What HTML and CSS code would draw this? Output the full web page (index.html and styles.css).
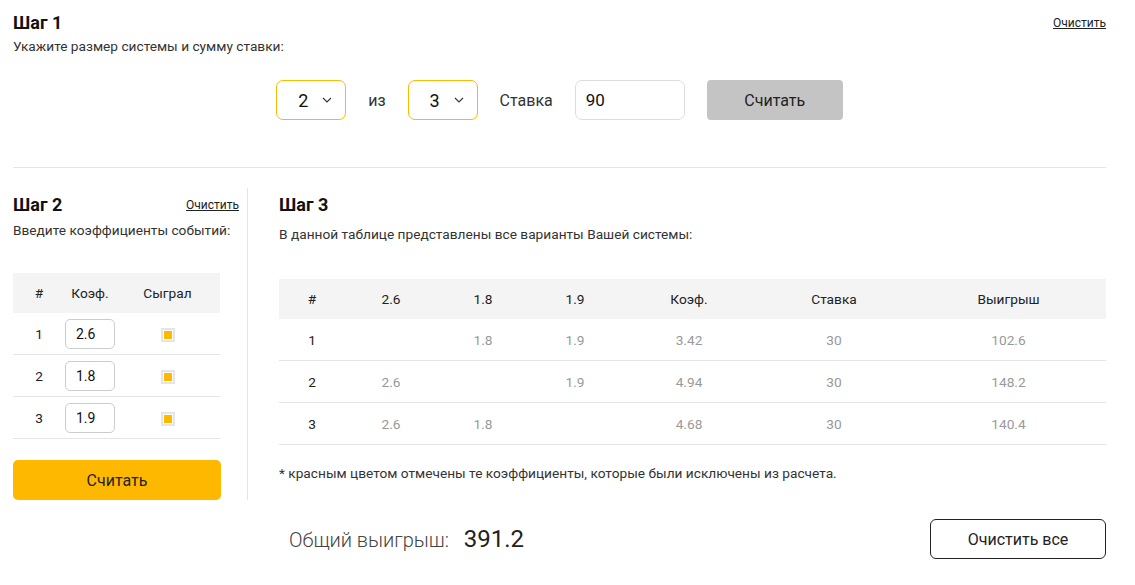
FILE: index.html
```html
<!DOCTYPE html>
<html lang="ru">
<head>
    <meta charset="UTF-8">
    <meta name="viewport" content="width=device-width, initial-scale=1.0">
    <title>Калькулятор систем</title>
    <link rel="stylesheet" href="styles.css">
</head>
<body>
    <div class="page">
        <div class="step1">
            <div class="step-head">
                <h2>Шаг 1</h2>
                <a href="#" class="clear-link">Очистить</a>
            </div>
            <p class="hint">Укажите размер системы и сумму ставки:</p>
            <div class="controls">
                <div class="select">2 <svg width="10" height="6" viewBox="0 0 10 6"><path d="M1 1l4 4 4-4" fill="none" stroke="#333" stroke-width="1.1"/></svg></div>
                <span class="label">из</span>
                <div class="select">3 <svg width="10" height="6" viewBox="0 0 10 6"><path d="M1 1l4 4 4-4" fill="none" stroke="#333" stroke-width="1.1"/></svg></div>
                <span class="label">Ставка</span>
                <input type="text" class="stake" value="90">
                <button class="btn-gray">Считать</button>
            </div>
        </div>

        <div class="steps">
            <div class="step2">
                <div class="step-head">
                    <h2>Шаг 2</h2>
                    <a href="#" class="clear-link">Очистить</a>
                </div>
                <p class="hint">Введите коэффициенты событий:</p>
                <table class="odds">
                    <thead>
                        <tr><th class="o-num">#</th><th class="o-k">Коэф.</th><th>Сыграл</th></tr>
                    </thead>
                    <tbody>
                        <tr><td>1</td><td><input type="text" value="2.6"></td><td><span class="check"></span></td></tr>
                        <tr><td>2</td><td><input type="text" value="1.8"></td><td><span class="check"></span></td></tr>
                        <tr><td>3</td><td><input type="text" value="1.9"></td><td><span class="check"></span></td></tr>
                    </tbody>
                </table>
                <button class="btn-yellow">Считать</button>
            </div>

            <div class="step3">
                <h2>Шаг 3</h2>
                <p class="hint">В данной таблице представлены все варианты Вашей системы:</p>
                <table class="result">
                    <thead>
                        <tr>
                            <th class="c-num">#</th>
                            <th class="c-odd">2.6</th>
                            <th class="c-odd">1.8</th>
                            <th class="c-odd">1.9</th>
                            <th class="c-k">Коэф.</th>
                            <th class="c-st">Ставка</th>
                            <th>Выигрыш</th>
                        </tr>
                    </thead>
                    <tbody>
                        <tr><td class="c-num">1</td><td></td><td>1.8</td><td>1.9</td><td>3.42</td><td>30</td><td>102.6</td></tr>
                        <tr><td class="c-num">2</td><td>2.6</td><td></td><td>1.9</td><td>4.94</td><td>30</td><td>148.2</td></tr>
                        <tr><td class="c-num">3</td><td>2.6</td><td>1.8</td><td></td><td>4.68</td><td>30</td><td>140.4</td></tr>
                    </tbody>
                </table>
                <p class="note">* красным цветом отмечены те коэффициенты, которые были исключены из расчета.</p>
                <div class="total-row">
                    <div class="total">Общий выигрыш: <b>391.2</b></div>
                    <button class="btn-outline">Очистить все</button>
                </div>
            </div>
        </div>
    </div>
</body>
</html>
```

FILE: styles.css
```css
body {
    font-family: Roboto, "Liberation Sans", sans-serif;
    background-color: white;
    color: #222;
    margin: 0;
    padding: 0;
}

.page {
    padding: 12px 29px 0 13px;
}

h2 {
    font-size: 18px;
    font-weight: bold;
    margin: 0;
    color: #111;
    line-height: 22px;
}

.hint {
    font-size: 13.7px;
    color: #333;
    margin: 3px 0 0;
    line-height: 18px;
}

.step-head {
    display: flex;
    justify-content: space-between;
    align-items: flex-start;
}

.clear-link {
    font-size: 12px;
    color: #222;
    text-decoration: underline;
    margin-top: 4px;
}

/* шаг 1 */
.step1 {
    border-bottom: 1px solid #e5e5e5;
    padding-bottom: 47px;
}

.controls {
    display: flex;
    justify-content: center;
    align-items: center;
    gap: 22px;
    margin-top: 25px;
}

.select {
    width: 70px;
    height: 40px;
    box-sizing: border-box;
    border: 1px solid #ffb800;
    border-radius: 7px;
    display: flex;
    align-items: center;
    gap: 14px;
    font-size: 18px;
    color: #111;
    padding-left: 21px;
}

.label {
    font-size: 16px;
    color: #333;
}

.stake {
    width: 110px;
    height: 40px;
    box-sizing: border-box;
    border: 1px solid #ddd;
    border-radius: 7px;
    padding: 0 10px;
    font-family: inherit;
    font-size: 17px;
    color: #111;
}

.btn-gray {
    width: 136px;
    height: 40px;
    background-color: #c4c4c4;
    border: none;
    border-radius: 4px;
    font-family: inherit;
    font-size: 16px;
    color: #222;
}

/* шаг 2 и 3 */
.steps {
    display: flex;
    margin-top: 20px;
}

.step2 {
    width: 226px;
    padding-right: 8px;
    border-right: 1px solid #e5e5e5;
    padding-top: 6px;
    height: 306px;
}

.step2 .hint {
    margin-top: 5px;
}

.odds {
    width: 207px;
    border-collapse: separate;
    border-spacing: 0;
    margin-top: 34px;
    font-size: 13.7px;
}

.odds th {
    background-color: #f4f4f4;
    font-weight: normal;
    height: 40px;
    padding: 0;
    color: #222;
}

.odds td {
    height: 41px;
    padding: 0;
    border-bottom: 1px solid #e5e5e5;
    text-align: center;
    color: #222;
}

.odds .o-num {
    width: 52px;
}

.odds .o-k {
    width: 50px;
}

.odds td input {
    width: 50px;
    height: 30px;
    box-sizing: border-box;
    border: 1px solid #ccc;
    border-radius: 5px;
    padding: 0 10px;
    font-family: inherit;
    font-size: 14px;
    color: #111;
    display: block;
}

.check {
    display: inline-block;
    width: 10px;
    height: 10px;
    border: 2px solid #e5e5e5;
    background-color: #ffb800;
    box-shadow: inset 0 0 0 1px white;
    vertical-align: middle;
}

.btn-yellow {
    width: 208px;
    height: 40px;
    margin-top: 21px;
    background-color: #ffb800;
    border: none;
    border-radius: 5px;
    font-family: inherit;
    font-size: 16px;
    color: #222;
}

.step3 {
    flex: 1;
    padding-left: 31px;
    padding-top: 6px;
}

.step3 .hint {
    margin-top: 9px;
}

.result {
    width: 100%;
    border-collapse: separate;
    border-spacing: 0;
    margin-top: 36px;
    font-size: 13.7px;
}

.result th {
    background-color: #f4f4f4;
    font-weight: normal;
    height: 40px;
    padding: 0;
    color: #222;
}

.result td {
    height: 41px;
    padding: 0;
    border-bottom: 1px solid #e5e5e5;
    text-align: center;
    color: #999;
}

.result .c-num {
    width: 66px;
    color: #222;
}

.result .c-odd {
    width: 92px;
}

.result .c-k {
    width: 136px;
}

.result .c-st {
    width: 154px;
}

.note {
    font-size: 13.7px;
    color: #333;
    margin: 20px 0 0;
}

.total-row {
    display: flex;
    justify-content: space-between;
    align-items: center;
    margin-top: 38px;
}

.total {
    font-size: 20px;
    color: #444;
    padding-left: 10px;
    font-weight: 300;
}

.total b {
    font-size: 24px;
    font-weight: normal;
    color: #222;
    margin-left: 10px;
}

.btn-outline {
    width: 176px;
    height: 40px;
    background-color: white;
    border: 1px solid #222;
    border-radius: 6px;
    font-family: inherit;
    font-size: 16px;
    color: #222;
}
```
